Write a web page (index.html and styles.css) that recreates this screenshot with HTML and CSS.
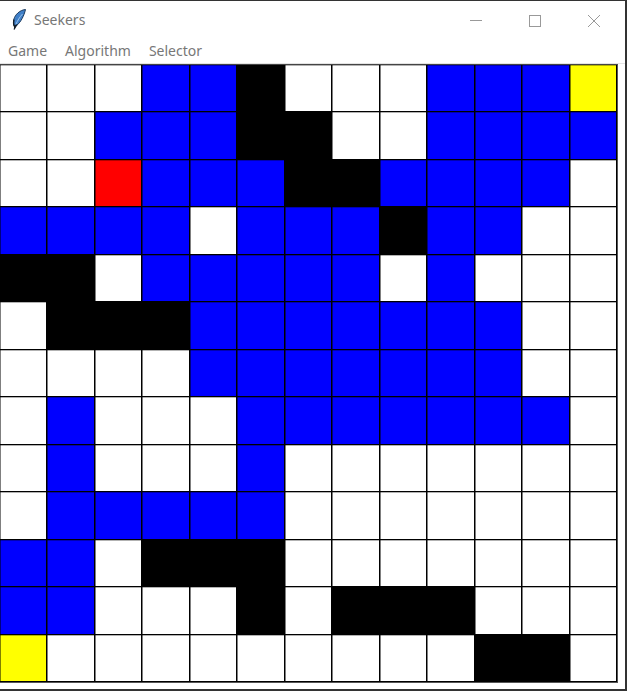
FILE: index.html
```html
<!DOCTYPE html>
<html lang="en">
<head>
    <meta charset="UTF-8">
    <meta name="viewport" content="width=device-width, initial-scale=1.0">
    <title>Seekers</title>
    <link rel="stylesheet" href="styles.css">
</head>
<body>
    <div class="window">
        <div class="titlebar">
            <svg class="app-icon" width="16" height="22" viewBox="0 0 16 22">
                <path d="M14.500 .5C9 1 4 5.500 2.800 10.500c-.5 2.500-.3 5 .4 6.500l3-1c3.500-3 6.800-9 8.300-15.500z" fill="#3f7fc8" stroke="#1c3a5c"/>
                <path d="M11.500 5C8.500 8 6.500 12 5 15" fill="none" stroke="#9cc4ea"/>
                <path d="M3 10.500c-.6 3-.4 5.500.2 6.500l2.300-.8L3 20.500" fill="#15202b" stroke="#15202b" stroke-width="1.300"/>
            </svg>
            <span class="title">Seekers</span>
            <div class="controls">
                <svg class="control" width="46" height="38" viewBox="0 0 46 38"><path d="M17 19.500h12" stroke="#999" fill="none"/></svg>
                <svg class="control" width="46" height="38" viewBox="0 0 46 38"><rect x="17.500" y="14.500" width="11" height="11" stroke="#999" fill="none"/></svg>
                <svg class="control" width="46" height="38" viewBox="0 0 46 38"><path d="M17 14l12 12M29 14L17 26" stroke="#999" fill="none"/></svg>
            </div>
        </div>
        <div class="menubar">
            <span>Game</span>
            <span>Algorithm</span>
            <span>Selector</span>
        </div>
        <div class="board">
            <i></i><i></i><i></i><i class="b"></i><i class="b"></i><i class="k"></i><i></i><i></i><i></i><i class="b"></i><i class="b"></i><i class="b"></i><i class="y"></i>
            <i></i><i></i><i class="b"></i><i class="b"></i><i class="b"></i><i class="k"></i><i class="k"></i><i></i><i></i><i class="b"></i><i class="b"></i><i class="b"></i><i class="b"></i>
            <i></i><i></i><i class="r"></i><i class="b"></i><i class="b"></i><i class="b"></i><i class="k"></i><i class="k"></i><i class="b"></i><i class="b"></i><i class="b"></i><i class="b"></i><i></i>
            <i class="b"></i><i class="b"></i><i class="b"></i><i class="b"></i><i></i><i class="b"></i><i class="b"></i><i class="b"></i><i class="k"></i><i class="b"></i><i class="b"></i><i></i><i></i>
            <i class="k"></i><i class="k"></i><i></i><i class="b"></i><i class="b"></i><i class="b"></i><i class="b"></i><i class="b"></i><i></i><i class="b"></i><i></i><i></i><i></i>
            <i></i><i class="k"></i><i class="k"></i><i class="k"></i><i class="b"></i><i class="b"></i><i class="b"></i><i class="b"></i><i class="b"></i><i class="b"></i><i class="b"></i><i></i><i></i>
            <i></i><i></i><i></i><i></i><i class="b"></i><i class="b"></i><i class="b"></i><i class="b"></i><i class="b"></i><i class="b"></i><i class="b"></i><i></i><i></i>
            <i></i><i class="b"></i><i></i><i></i><i></i><i class="b"></i><i class="b"></i><i class="b"></i><i class="b"></i><i class="b"></i><i class="b"></i><i class="b"></i><i></i>
            <i></i><i class="b"></i><i></i><i></i><i></i><i class="b"></i><i></i><i></i><i></i><i></i><i></i><i></i><i></i>
            <i></i><i class="b"></i><i class="b"></i><i class="b"></i><i class="b"></i><i class="b"></i><i></i><i></i><i></i><i></i><i></i><i></i><i></i>
            <i class="b"></i><i class="b"></i><i></i><i class="k"></i><i class="k"></i><i class="k"></i><i></i><i></i><i></i><i></i><i></i><i></i><i></i>
            <i class="b"></i><i class="b"></i><i></i><i></i><i></i><i class="k"></i><i></i><i class="k"></i><i class="k"></i><i class="k"></i><i></i><i></i><i></i>
            <i class="y"></i><i></i><i></i><i></i><i></i><i></i><i></i><i></i><i></i><i></i><i class="k"></i><i class="k"></i><i></i>
        </div>
    </div>
</body>
</html>
```
FILE: styles.css
```css
html, body {
    margin: 0;
    background-color: #fff;
}
.window {
    box-sizing: border-box;
    width: 627px;
    height: 691px;
    border-top: 1px solid #333;
    border-right: 2px solid #333;
    border-bottom: 2px solid #333;
    font-family: 'Noto Sans', 'Open Sans', sans-serif;
    color: #777;
    overflow: hidden;
}
.titlebar {
    display: flex;
    align-items: center;
    height: 37px;
    padding-left: 11px;
}
.app-icon {
    flex: none;
}
.title {
    margin-left: 7px;
    font-size: 14px;
}
.controls {
    display: flex;
    margin-left: auto;
    margin-right: 8px;
    gap: 13px;
}
.control {
    display: block;
}
.menubar {
    display: flex;
    gap: 18px;
    height: 25px;
    align-items: center;
    padding-left: 8px;
    font-size: 14px;
    border-bottom: 1px solid #e4e4e4;
}
/* tracks alternate 47/48 so every line lands on a whole pixel */
.board {
    display: grid;
    grid-template-columns: repeat(6, 47px 48px) 47px;
    grid-template-rows: repeat(6, 47px 48px) 47px;
    width: 617px;
    border-top: 1px solid #444;
    border-right: 1px solid #555;
    border-bottom: 1px solid #555;
}
.board i {
    display: block;
    background-color: #fff;
    box-shadow: inset -1px -1px 0 #000, inset 1px 0 0 rgba(0, 0, 0, 0.5), inset 0 1px 0 rgba(0, 0, 0, 0.3);
}
.board .b { background-color: #00f; }
.board .k { background-color: #000; }
.board .r { background-color: #f00; }
.board .y { background-color: #ff0; }
```
